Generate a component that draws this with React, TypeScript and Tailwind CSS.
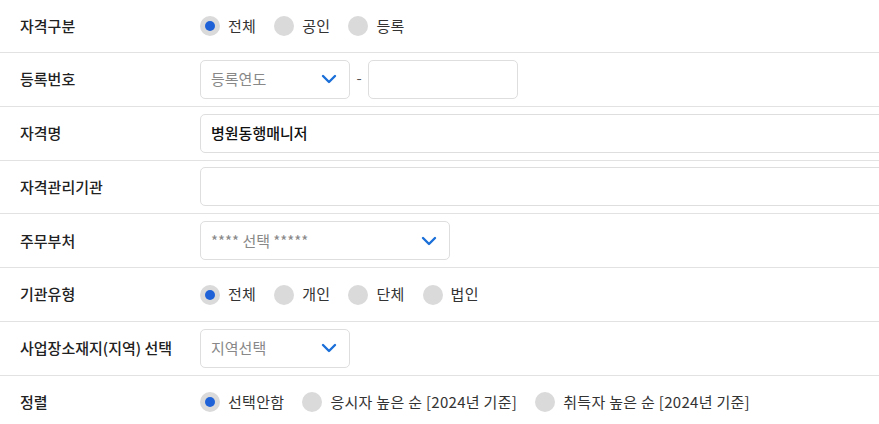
import { ReactNode } from 'react';

const font = { fontFamily: '"Noto Sans CJK KR", "Noto Sans", sans-serif' };

function Chevron() {
  return (
    <svg className="w-[16px] h-[10px] text-[#1b6fd8]" viewBox="0 0 16 10" fill="none" stroke="currentColor">
      <path d="M2 2l6 6 6-6" strokeWidth={2.4} strokeLinecap="round" strokeLinejoin="round" />
    </svg>
  );
}

function Row({ label, first, children }: { label: string; first?: boolean; children: ReactNode }) {
  return (
    <div
      className={`flex items-center border-b border-[#e2e2e2] ${first ? 'h-[53px]' : 'h-[53.8px]'}`}
    >
      <div className="w-[200px] shrink-0 pl-5 text-[15px] font-medium text-[#222]">{label}</div>
      <div className="flex items-center flex-1 min-w-0">{children}</div>
    </div>
  );
}

function Radios({ items, selected }: { items: string[]; selected: number }) {
  return (
    <div className="flex items-center gap-[18px]">
      {items.map((item, i) => (
        <label key={item} className="flex items-center gap-2 text-[15px] text-[#333] whitespace-nowrap tracking-[0.3px]">
          <span className="w-5 h-5 rounded-full bg-[#dadada] flex items-center justify-center">
            {i === selected && <span className="w-[10px] h-[10px] rounded-full bg-[#1f62d8]" />}
          </span>
          {item}
        </label>
      ))}
    </div>
  );
}

function Select({ placeholder, width }: { placeholder: string; width: string }) {
  return (
    <div
      className={`${width} h-[39px] shrink-0 border border-[#dedede] rounded-[5px] flex items-center justify-between pl-[10px] pr-[12px] text-[15px] text-[#888]`}
    >
      <span>{placeholder}</span>
      <Chevron />
    </div>
  );
}

export default function App() {
  return (
    <div className="w-[879px] h-[424px] overflow-hidden bg-white" style={font}>
      <Row label="자격구분" first>
        <Radios items={['전체', '공인', '등록']} selected={0} />
      </Row>
      <Row label="등록번호">
        <Select placeholder="등록연도" width="w-[150px]" />
        <span className="w-[18px] text-center text-[15px] text-[#555] -mt-[2px]">-</span>
        <div className="w-[150px] h-[39px] border border-[#dedede] rounded-[5px]" />
      </Row>
      <Row label="자격명">
        <div className="w-[720px] h-[39px] shrink-0 border border-[#dedede] rounded-[5px] flex items-center pl-[10px] text-[15px] font-medium text-[#111]">
          병원동행매니저
        </div>
      </Row>
      <Row label="자격관리기관">
        <div className="w-[720px] h-[39px] shrink-0 border border-[#dedede] rounded-[5px]" />
      </Row>
      <Row label="주무부처">
        <Select placeholder="**** 선택 *****" width="w-[250px]" />
      </Row>
      <Row label="기관유형">
        <Radios items={['전체', '개인', '단체', '법인']} selected={0} />
      </Row>
      <Row label="사업장소재지(지역) 선택">
        <Select placeholder="지역선택" width="w-[150px]" />
      </Row>
      <Row label="정렬">
        <Radios items={['선택안함', '응시자 높은 순 [2024년 기준]', '취득자 높은 순 [2024년 기준]']} selected={0} />
      </Row>
    </div>
  );
}
